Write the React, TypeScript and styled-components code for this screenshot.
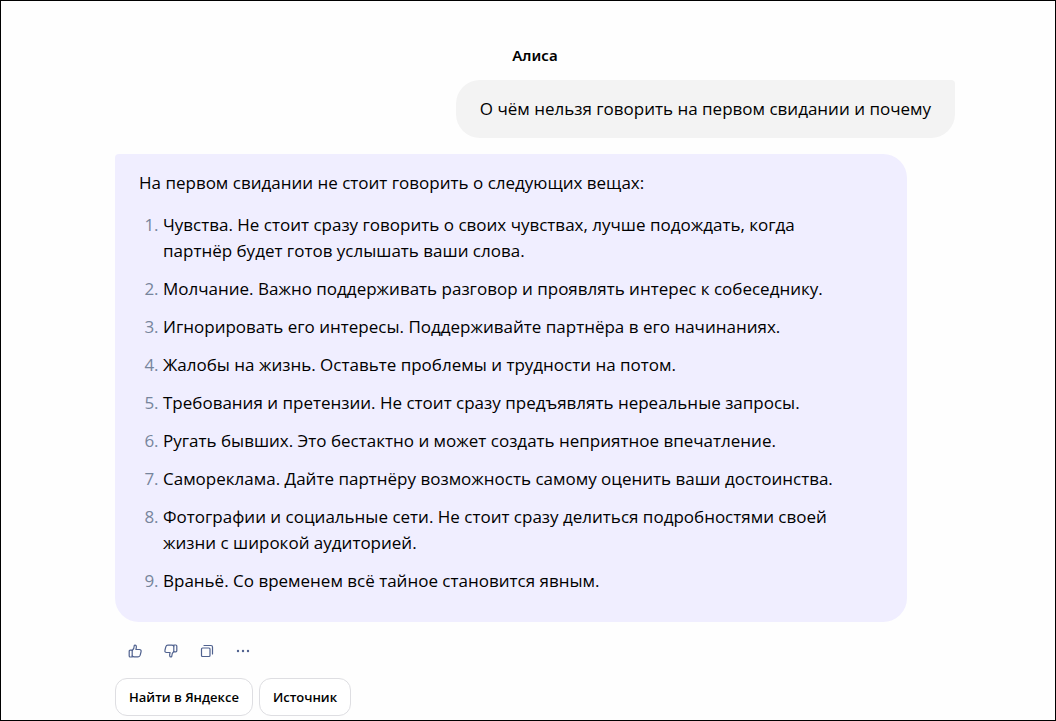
import React from "react";
import styled, { createGlobalStyle } from "styled-components";

const GlobalStyle = createGlobalStyle`
  *, *::before, *::after { box-sizing: border-box; }
  body {
    margin: 0;
    background: #fefefe;
    color: #000;
    font-family: "Open Sans", "Noto Sans", sans-serif;
  }
`;

const Page = styled.main`
  min-height: 100vh;
  padding: 44px 100px 4px 114px;
  border: 1px solid #000;
`;

const Chat = styled.div`
  display: flex;
  flex-direction: column;
  max-width: 840px;
  margin: 0 auto;
`;

const Title = styled.h1`
  margin: 0 0 15px;
  text-align: center;
  font-family: "Noto Sans", sans-serif;
  font-size: 15px;
  font-weight: 600;
  line-height: 20px;
`;

const Bubble = styled.section<{ $own?: boolean }>`
  align-self: ${(p) => (p.$own ? "flex-end" : "flex-start")};
  width: ${(p) => (p.$own ? "auto" : "calc(100% - 48px)")};
  margin-bottom: 16px;
  padding: ${(p) => (p.$own ? "16px 24px" : "16px 48px 28px 24px")};
  border-radius: ${(p) => (p.$own ? "24px 4px 24px 24px" : "4px 24px 24px 24px")};
  background: ${(p) => (p.$own ? "#f3f3f3" : "#f0eeff")};
  font-size: 17px;
  line-height: 26px;
`;

const Paragraph = styled.p`
  margin: 0;
`;

const List = styled.ol`
  display: flex;
  flex-direction: column;
  gap: 12px;
  margin: 16px 0 0;
  padding: 0 0 0 24px;
`;

const Item = styled.li`
  &::marker {
    color: #77859c;
  }
`;

const Actions = styled.div`
  display: flex;
  gap: 12px;
  padding: 1px 0 0 8px;
  margin-bottom: 15px;
`;

const IconButton = styled.button`
  display: grid;
  place-items: center;
  width: 24px;
  height: 24px;
  padding: 0;
  border: 0;
  background: none;
  color: #50628f;
  cursor: pointer;
`;

const Links = styled.div`
  display: flex;
  gap: 6px;
`;

const Pill = styled.button`
  height: 38px;
  padding: 0 13px;
  border: 1px solid #dedee2;
  border-radius: 12px;
  background: #fff;
  color: inherit;
  font: 600 13px/20px "Open Sans", "Noto Sans", sans-serif;
  white-space: nowrap;
  cursor: pointer;
`;

const Icon = ({ children }: { children: React.ReactNode }) => (
  <svg
    width="16"
    height="16"
    viewBox="0 0 16 16"
    fill="none"
    stroke="currentColor"
    strokeWidth="1.2"
    strokeLinejoin="round"
    strokeLinecap="round"
    aria-hidden="true"
  >
    {children}
  </svg>
);

const thumb = (
  <>
    <path d="M5.2 7.2H3.2a1 1 0 0 0-1 1V13a1 1 0 0 0 1 1h2z" />
    <path d="M5.2 7.5C6.7 6.4 7.2 5 7.2 3c0-1.3 1.9-1.3 2.1.1.2 1.2 0 2.2-.4 3.4h3.6c1.2 0 1.9.9 1.6 2l-.9 3.7c-.3 1.1-1 1.7-2.1 1.7H7.2c-.9 0-1.5-.3-2-.9" />
  </>
);

const answers = [
  "Чувства. Не стоит сразу говорить о своих чувствах, лучше подождать, когда партнёр будет готов услышать ваши слова.",
  "Молчание. Важно поддерживать разговор и проявлять интерес к собеседнику.",
  "Игнорировать его интересы. Поддерживайте партнёра в его начинаниях.",
  "Жалобы на жизнь. Оставьте проблемы и трудности на потом.",
  "Требования и претензии. Не стоит сразу предъявлять нереальные запросы.",
  "Ругать бывших. Это бестактно и может создать неприятное впечатление.",
  "Самореклама. Дайте партнёру возможность самому оценить ваши достоинства.",
  "Фотографии и социальные сети. Не стоит сразу делиться подробностями своей жизни с широкой аудиторией.",
  "Враньё. Со временем всё тайное становится явным.",
];

export default function App() {
  return (
    <>
      <GlobalStyle />
      <Page>
        <Chat>
          <Title>Алиса</Title>
          <Bubble $own>
            <Paragraph>О чём нельзя говорить на первом свидании и почему</Paragraph>
          </Bubble>
          <Bubble>
            <Paragraph>На первом свидании не стоит говорить о следующих вещах:</Paragraph>
            <List>
              {answers.map((text) => (
                <Item key={text}>{text}</Item>
              ))}
            </List>
          </Bubble>
          <Actions>
            <IconButton type="button" aria-label="Нравится">
              <Icon>{thumb}</Icon>
            </IconButton>
            <IconButton type="button" aria-label="Не нравится">
              <Icon>
                <g transform="rotate(180 8 8)">{thumb}</g>
              </Icon>
            </IconButton>
            <IconButton type="button" aria-label="Копировать">
              <Icon>
                <rect x="2.5" y="5" width="8.5" height="8.5" rx="1" />
                <path d="M5 2.500h7c1 0 1.500.5 1.500 1.500v7" />
              </Icon>
            </IconButton>
            <IconButton type="button" aria-label="Ещё">
              <Icon>
                <g fill="currentColor" stroke="none">
                  <circle cx="3" cy="8" r="1.2" />
                  <circle cx="8" cy="8" r="1.2" />
                  <circle cx="13" cy="8" r="1.2" />
                </g>
              </Icon>
            </IconButton>
          </Actions>
          <Links>
            <Pill type="button">Найти в Яндексе</Pill>
            <Pill type="button">Источник</Pill>
          </Links>
        </Chat>
      </Page>
    </>
  );
}
